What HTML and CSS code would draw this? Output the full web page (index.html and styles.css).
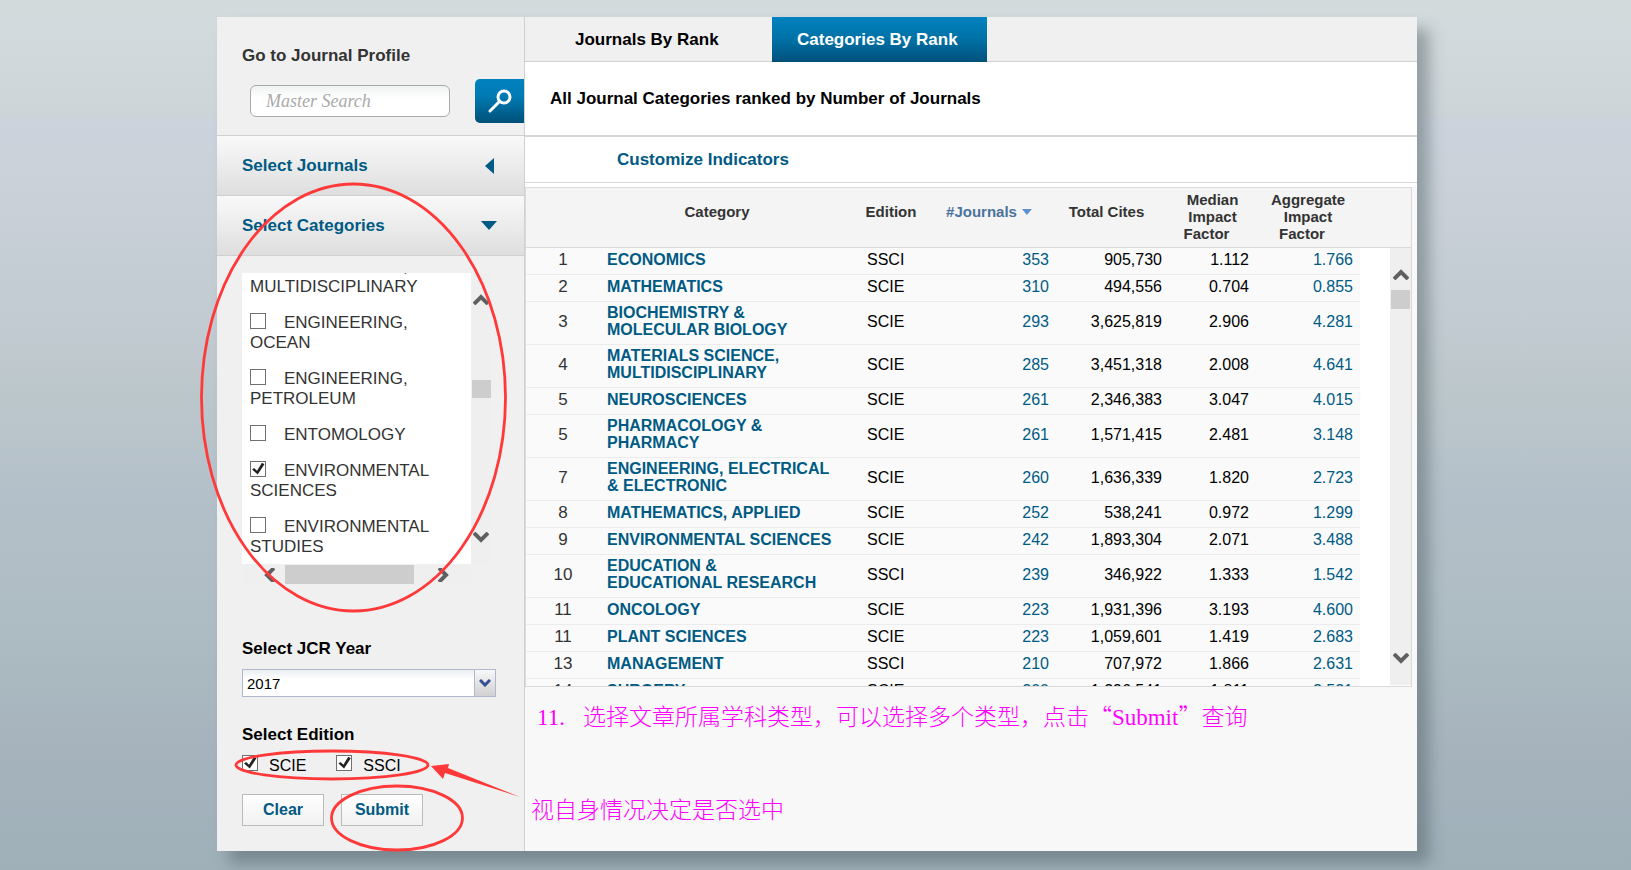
FILE: index.html
```html
<!DOCTYPE html>
<html lang="en">
<head>
  <meta charset="UTF-8" />
  <meta name="viewport" content="width=device-width, initial-scale=1.0"/>
  <title>Categories By Rank</title>
  <link rel="stylesheet" href="styles.css">
</head>
<body>

  <div class="page">
    <aside class="sidebar">
      <form class="search-box">
        <label for="masterSearch">Go to Journal Profile</label>
        <div class="search-row">
          <input type="text" id="masterSearch" name="masterSearch" placeholder="Master Search" />
          <button type="button" class="search-btn" aria-label="Search">
            <svg width="24" height="24" viewBox="0 0 24 24" fill="none" stroke="#fff" stroke-linecap="round">
              <circle cx="16" cy="8" r="6" stroke-width="3" />
              <path d="M11.500 12.500L2 22" stroke-width="3" />
            </svg>
          </button>
        </div>
      </form>

      <button type="button" class="accordion">
        Select Journals
        <svg class="arrow-left" width="9" height="16" viewBox="0 0 9 16"><path d="M9 0V16L0 8Z" fill="#005a84" /></svg>
      </button>
      <button type="button" class="accordion">
        Select Categories
        <svg class="arrow-down" width="16" height="9" viewBox="0 0 16 9"><path d="M0 0H16L8 9Z" fill="#005a84" /></svg>
      </button>

      <form class="filters">
        <div class="category-box">
          <div class="category-list">
            <div class="category-scroll">
              <label><input type="checkbox" name="category" />ENGINEERING, MULTIDISCIPLINARY</label>
              <label><input type="checkbox" name="category" />ENGINEERING, OCEAN</label>
              <label><input type="checkbox" name="category" />ENGINEERING, PETROLEUM</label>
              <label><input type="checkbox" name="category" />ENTOMOLOGY</label>
              <label><input type="checkbox" name="category" checked />ENVIRONMENTAL SCIENCES</label>
              <label><input type="checkbox" name="category" />ENVIRONMENTAL STUDIES</label>
            </div>
          </div>
          <div class="v-bar">
            <svg width="16" height="12" viewBox="0 0 16 12"><path d="M1 11L8 4L15 11" fill="none" stroke="#606060" stroke-width="4" /></svg>
            <span class="thumb"></span>
            <svg width="16" height="12" viewBox="0 0 16 12"><path d="M1 1L8 8L15 1" fill="none" stroke="#606060" stroke-width="4" /></svg>
          </div>
          <div class="h-bar">
            <svg width="12" height="14" viewBox="0 0 12 14"><path d="M11 0L4 7L11 14" fill="none" stroke="#606060" stroke-width="4" /></svg>
            <span class="thumb"></span>
            <svg width="12" height="14" viewBox="0 0 12 14"><path d="M1 0L8 7L1 14" fill="none" stroke="#606060" stroke-width="4" /></svg>
          </div>
        </div>

        <label class="field-title" for="year">Select JCR Year</label>
        <div class="select-wrap">
          <select id="year" name="year">
            <option>2017</option>
            <option>2016</option>
            <option>2015</option>
          </select>
          <span class="select-btn">
            <svg width="12" height="8" viewBox="0 0 12 8"><path d="M1 1L6 6L11 1" fill="none" stroke="#345291" stroke-width="3" /></svg>
          </span>
        </div>

        <div class="field-title">Select Edition</div>
        <div class="editions">
          <label><input type="checkbox" name="edition" value="SCIE" checked />SCIE</label>
          <label><input type="checkbox" name="edition" value="SSCI" checked />SSCI</label>
        </div>

        <div class="button-group">
          <button type="reset" class="btn">Clear</button>
          <button type="button" class="btn">Submit</button>
        </div>
      </form>
    </aside>

    <main class="content">
      <nav class="tabs">
        <a href="#">Journals By Rank</a>
        <a href="#" class="active">Categories By Rank</a>
      </nav>
      <h1>All Journal Categories ranked by Number of Journals</h1>
      <div class="customize"><a href="#">Customize Indicators</a></div>

      <div class="grid-area">
        <div class="grid-box">
          <table>
            <colgroup>
              <col class="col-rank"><col class="col-category"><col class="col-edition"><col class="col-journals">
              <col class="col-cites"><col class="col-median"><col class="col-aggregate"><col class="col-space">
            </colgroup>
            <thead>
              <tr>
                <th></th>
                <th class="one-line category-head">Category</th>
                <th class="one-line">Edition</th>
                <th class="one-line sorted">#Journals<span class="sort"></span></th>
                <th class="one-line">Total Cites<span class="sort"></span></th>
                <th>Median<br>Impact<br>Factor<span class="sort"></span></th>
                <th>Aggregate<br>Impact<br>Factor<span class="sort"></span></th>
                <th></th>
              </tr>
            </thead>
            <tbody>
              <tr><td>1</td><td><a href="#">ECONOMICS</a></td><td>SSCI</td><td><a href="#">353</a></td><td>905,730</td><td>1.112</td><td><a href="#">1.766</a></td><td></td></tr>
              <tr><td>2</td><td><a href="#">MATHEMATICS</a></td><td>SCIE</td><td><a href="#">310</a></td><td>494,556</td><td>0.704</td><td><a href="#">0.855</a></td><td></td></tr>
              <tr><td>3</td><td><a href="#">BIOCHEMISTRY &amp;<br>MOLECULAR BIOLOGY</a></td><td>SCIE</td><td><a href="#">293</a></td><td>3,625,819</td><td>2.906</td><td><a href="#">4.281</a></td><td></td></tr>
              <tr><td>4</td><td><a href="#">MATERIALS SCIENCE,<br>MULTIDISCIPLINARY</a></td><td>SCIE</td><td><a href="#">285</a></td><td>3,451,318</td><td>2.008</td><td><a href="#">4.641</a></td><td></td></tr>
              <tr><td>5</td><td><a href="#">NEUROSCIENCES</a></td><td>SCIE</td><td><a href="#">261</a></td><td>2,346,383</td><td>3.047</td><td><a href="#">4.015</a></td><td></td></tr>
              <tr><td>5</td><td><a href="#">PHARMACOLOGY &amp;<br>PHARMACY</a></td><td>SCIE</td><td><a href="#">261</a></td><td>1,571,415</td><td>2.481</td><td><a href="#">3.148</a></td><td></td></tr>
              <tr><td>7</td><td><a href="#">ENGINEERING, ELECTRICAL<br>&amp; ELECTRONIC</a></td><td>SCIE</td><td><a href="#">260</a></td><td>1,636,339</td><td>1.820</td><td><a href="#">2.723</a></td><td></td></tr>
              <tr><td>8</td><td><a href="#">MATHEMATICS, APPLIED</a></td><td>SCIE</td><td><a href="#">252</a></td><td>538,241</td><td>0.972</td><td><a href="#">1.299</a></td><td></td></tr>
              <tr><td>9</td><td><a href="#">ENVIRONMENTAL SCIENCES</a></td><td>SCIE</td><td><a href="#">242</a></td><td>1,893,304</td><td>2.071</td><td><a href="#">3.488</a></td><td></td></tr>
              <tr><td>10</td><td><a href="#">EDUCATION &amp;<br>EDUCATIONAL RESEARCH</a></td><td>SSCI</td><td><a href="#">239</a></td><td>346,922</td><td>1.333</td><td><a href="#">1.542</a></td><td></td></tr>
              <tr><td>11</td><td><a href="#">ONCOLOGY</a></td><td>SCIE</td><td><a href="#">223</a></td><td>1,931,396</td><td>3.193</td><td><a href="#">4.600</a></td><td></td></tr>
              <tr><td>11</td><td><a href="#">PLANT SCIENCES</a></td><td>SCIE</td><td><a href="#">223</a></td><td>1,059,601</td><td>1.419</td><td><a href="#">2.683</a></td><td></td></tr>
              <tr><td>13</td><td><a href="#">MANAGEMENT</a></td><td>SSCI</td><td><a href="#">210</a></td><td>707,972</td><td>1.866</td><td><a href="#">2.631</a></td><td></td></tr>
              <tr><td>14</td><td><a href="#">SURGERY</a></td><td>SCIE</td><td><a href="#">200</a></td><td>1,296,541</td><td>1.811</td><td><a href="#">2.521</a></td><td></td></tr>
            </tbody>
          </table>
          <div class="grid-bar">
            <svg width="16" height="12" viewBox="0 0 16 12"><path d="M1 11L8 4L15 11" fill="none" stroke="#606060" stroke-width="4" /></svg>
            <span class="thumb"></span>
            <svg width="16" height="12" viewBox="0 0 16 12"><path d="M1 1L8 8L15 1" fill="none" stroke="#606060" stroke-width="4" /></svg>
          </div>
        </div>
      </div>

      <div class="notes">
        <p class="note-step"><span class="latin number">11.</span>选择文章所属学科类型，可以选择多个类型，点击“<span class="latin">Submit</span>”查询</p>
        <p class="note-edition">视自身情况决定是否选中</p>
      </div>
    </main>

    <!-- hand-drawn marks over the filters -->
    <svg class="marks" width="330" height="834" viewBox="0 0 330 834">
      <g fill="none" stroke="#ff3939" stroke-width="2.800">
        <ellipse cx="136.500" cy="380.500" rx="152" ry="213.500" />
        <ellipse cx="115" cy="748" rx="96" ry="14" />
        <ellipse cx="180" cy="801" rx="65.500" ry="32" />
      </g>
      <path d="M214 749L232 747L231 751L303 780L228 756L226 762Z" fill="#ff3939" />
    </svg>
  </div>

</body>
</html>
```
FILE: styles.css
```css
* {
  box-sizing: border-box;
}

body {
  font-family: "Liberation Sans", Arial, sans-serif;
  font-size: 17px;
  color: #000;
  background: linear-gradient(#d3dbdd, #cdd5d8 13%, #ccd3dc 14%, #c5cdd4 32%, #bcc7cc 45%, #b4c0c9 57%, #adbbc2 73%, #a6b3bd 86%, #9fb0b9) no-repeat #9fb0b9;
  min-height: 100vh;
  margin: 0;
  padding: 17px 0 19px 3px;
}

a {
  color: #005a84;
  text-decoration: none;
}

button, input, select {
  font-family: inherit;
  margin: 0;
}

.page {
  position: relative;
  display: flex;
  max-width: 1200px;
  margin: 0 auto;
  box-shadow: 12px 12px 14px rgba(60, 75, 80, 0.4);
}

/* sidebar */
.sidebar {
  width: 308px;
  flex-shrink: 0;
  background: #f0f0f0;
  border-right: 1px solid #d0d0d0;
}

.search-box {
  height: 119px;
  padding: 29px 0 0 25px;
  border-bottom: 1px solid #d0d0d0;
}

.search-box label {
  display: block;
  line-height: 20px;
  font-weight: bold;
  color: #333;
}

.search-row {
  display: flex;
  justify-content: space-between;
  align-items: center;
  margin-top: 13px;
  padding-left: 8px;
}

.search-row input {
  width: 200px;
  height: 32px;
  padding: 0 15px;
  border: 1px solid #aaa;
  border-radius: 6px;
  background: linear-gradient(#eef2f2, #fff 40%);
  font-size: 18px;
}

.search-row input::placeholder {
  font-family: "Liberation Serif", serif;
  font-style: italic;
  color: #aaa;
}

.search-btn {
  display: flex;
  align-items: center;
  justify-content: center;
  width: 49px;
  height: 44px;
  padding: 0;
  border: 0;
  border-radius: 5px 0 0 5px;
  background: linear-gradient(#0082bf, #007ab3 40%, #005078);
}

.accordion {
  display: flex;
  align-items: center;
  justify-content: space-between;
  width: 100%;
  height: 60px;
  padding: 0 27px 0 25px;
  border: 0;
  border-bottom: 1px solid #d0d0d0;
  background: linear-gradient(#f9f9f9, #dedede);
  font-size: 17px;
  font-weight: bold;
  color: #005a84;
}

.arrow-left {
  margin-right: 3px;
}

.filters {
  padding: 17px 28px 25px 25px;
}

.category-box {
  display: grid;
  grid-template-columns: 1fr 20px;
  grid-template-rows: 291px 21px;
  margin-right: 5px;
}

.category-list {
  overflow: hidden;
  background: #fff;
}

/* scrolled part way down the list */
.category-scroll {
  margin-top: -16px;
}

.category-list label {
  display: block;
  width: 200px;
  margin: 0 0 16px 8px;
  line-height: 20px;
  color: #333;
}

.category-list input {
  margin-right: 18px;
}

input[type="checkbox"] {
  appearance: none;
  position: relative;
  width: 16px;
  height: 16px;
  border: 1px solid #707070;
  background: #fff;
  vertical-align: -1px;
}

input[type="checkbox"]:checked::after {
  content: "";
  position: absolute;
  inset: 0;
  background: #222;
  clip-path: polygon(8% 54%, 22% 42%, 43% 62%, 78% 6%, 96% 16%, 48% 90%);
}

.v-bar, .h-bar, .grid-bar {
  display: flex;
  align-items: center;
  background: #efefef;
}

.thumb {
  background: #cdcdcd;
}

.v-bar {
  flex-direction: column;
  justify-content: space-between;
  padding: 20px 0;
}

.v-bar .thumb {
  width: 19px;
  height: 18px;
  margin-bottom: 60px;
}

.h-bar {
  justify-content: space-between;
  padding: 0 21px;
}

.h-bar .thumb {
  width: 129px;
  height: 19px;
  margin-right: 14px;
}

.field-title {
  display: block;
  line-height: 20px;
  font-weight: bold;
}

label.field-title {
  margin-top: 54px;
}

.select-wrap {
  position: relative;
  margin: 10px 0 28px;
}

.select-wrap select {
  appearance: none;
  display: block;
  width: 100%;
  height: 28px;
  padding: 0 4px;
  border: 1px solid #b0b8cf;
  border-radius: 0;
  background: linear-gradient(#e9eef0, #fff 35%);
  font-size: 15px;
  color: #000;
}

.select-btn {
  position: absolute;
  top: 1px;
  right: 1px;
  bottom: 1px;
  display: flex;
  align-items: center;
  justify-content: center;
  width: 21px;
  border-left: 1px solid #b0b8cf;
  background: linear-gradient(#f8f8f8, #d0d0d0);
  pointer-events: none;
}

.editions {
  display: flex;
  gap: 30px;
  margin-top: 10px;
  font-size: 16px;
  line-height: 20px;
}

.editions input {
  margin-right: 11px;
  vertical-align: 0;
}

.button-group {
  display: flex;
  gap: 17px;
  margin-top: 18px;
}

.btn {
  width: 82px;
  height: 32px;
  padding: 0;
  border: 1px solid #bbb;
  background: linear-gradient(#fff, #f1f1f1);
  font-size: 16px;
  font-weight: bold;
  color: #005a84;
}

/* main column */
.content {
  display: flex;
  flex-direction: column;
  flex: 1;
  min-width: 0;
  background: #f8f8f8;
}

.tabs {
  display: flex;
  height: 45px;
  background: linear-gradient(#f0f0f0 44px, #d0d0d0 44px);
}

.tabs a {
  padding: 0 25px;
  line-height: 46px;
  font-weight: bold;
  color: #000;
}

.tabs a:first-child {
  width: 247px;
  padding-left: 50px;
}

.tabs a.active {
  width: 215px;
  height: 45px;
  color: #fff;
  background: linear-gradient(#0082bf, #0071a5 50%, #00507a);
}

h1 {
  margin: 0;
  padding: 0 25px;
  border-bottom: 2px solid #d8d8d8;
  background: #fff;
  font-size: 17px;
  line-height: 73px;
}

.customize {
  padding: 0 92px;
  border-bottom: 1px solid #d8d8d8;
  background: #fff;
  font-weight: bold;
  line-height: 45px;
}

.grid-area {
  padding: 4px 5px 0 0;
  background: linear-gradient(#fff 4px, #f8f8f8 4px);
}

.grid-box {
  position: relative;
  height: 500px;
  overflow: hidden;
  border: 1px solid #dadada;
  background: #fff;
}

table {
  width: 100%;
  table-layout: fixed;
  border-spacing: 0;
  font-size: 16px;
  line-height: 17px;
}

.col-rank { width: 74px; }
.col-category { width: 260px; }
.col-edition { width: 62px; }
.col-journals { width: 134px; }
.col-cites { width: 113px; }
.col-median { width: 87px; }
.col-aggregate { width: 104px; }
.col-space { width: 51px; }

th {
  height: 60px;
  padding: 0 0 2px;
  border-bottom: 1px solid #d8d8d8;
  background: #f4f4f4;
  font-size: 15px;
  color: #333;
}

th.one-line {
  padding-bottom: 12px;
}

th.category-head {
  padding-right: 26px;
}

th.sorted {
  color: #4a739f;
}

.sort {
  display: inline-block;
  width: 12px;
}

.sorted .sort {
  width: 10px;
  height: 6px;
  margin-left: 5px;
  background: #5c92d0;
  clip-path: polygon(0 0, 100% 0, 50% 100%);
  vertical-align: 2px;
}

tbody tr {
  height: 27px;
}

td {
  padding: 2px 7px 6px;
  border-bottom: 1px solid #ececec;
  background: #fafafa;
  text-align: right;
}

td:first-child {
  font-size: 17px;
  color: #333;
  text-align: center;
}

td:nth-child(2), td:nth-child(3) {
  text-align: left;
}

td:nth-child(2) {
  font-weight: bold;
  white-space: nowrap;
}

td:last-child {
  border: 0;
  background: #fff;
}

.grid-bar {
  position: absolute;
  top: 60px;
  right: 0;
  bottom: 1px;
  flex-direction: column;
  width: 21px;
  padding: 20px 0;
}

.grid-bar .thumb {
  width: 19px;
  height: 19px;
  margin: 10px 0 auto;
}

/* remarks under the table */
.notes {
  padding: 10px 6px 0;
  font-family: "Noto Sans CJK SC", sans-serif;
  font-weight: 300;
  font-size: 23px;
  line-height: 36px;
  color: #f0f;
}

.notes p {
  margin: 0;
}

.note-step {
  padding-left: 6px;
}

.notes .note-edition {
  margin-top: 54px;
}

.latin {
  font-family: "Liberation Serif", serif;
}

.number {
  margin-right: 18px;
}

.marks {
  position: absolute;
  top: 0;
  left: 0;
  overflow: visible;
  pointer-events: none;
}
```
